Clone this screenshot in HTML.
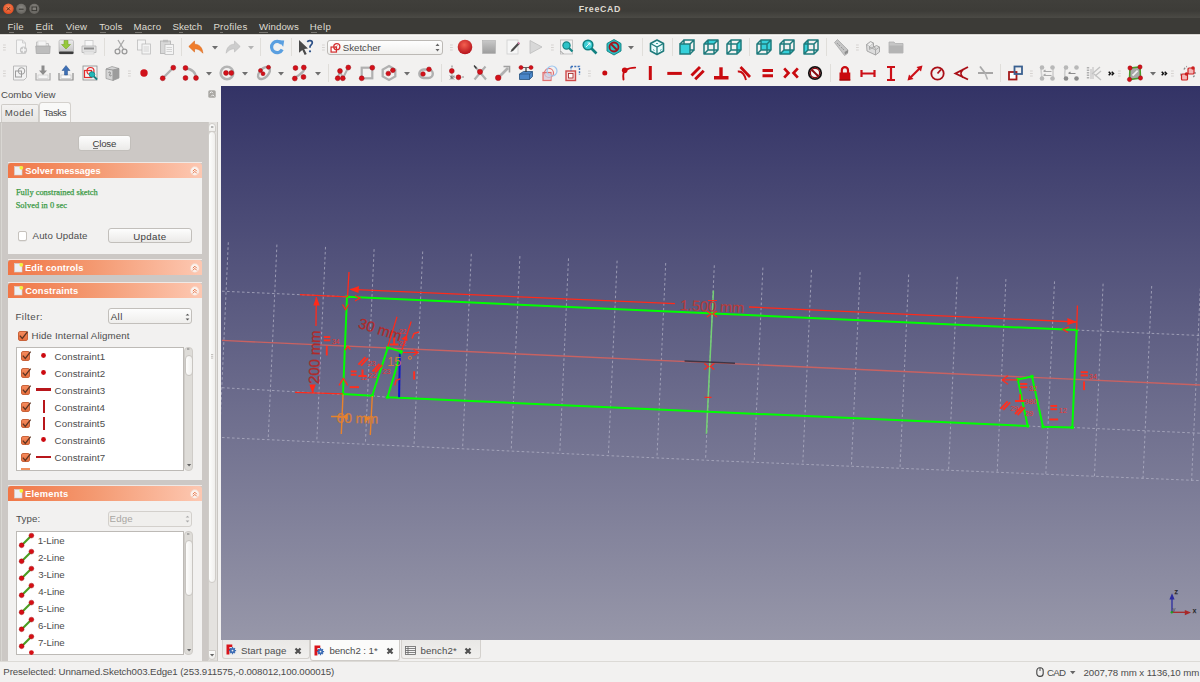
<!DOCTYPE html><html><head><meta charset="utf-8"><style>
html,body{margin:0;padding:0}
body{width:1200px;height:682px;overflow:hidden;position:relative;background:#f2f1f0;font-family:"Liberation Sans",sans-serif}
.t{position:absolute;white-space:pre;line-height:1}
svg{overflow:visible}
</style></head><body>
<div style="position:absolute;left:0px;top:0px;width:1200px;height:18px;background:linear-gradient(#403f3b,#3d3c38 60%,#4b4a45)"></div>
<div class="t" style="left:578.72px;top:5.35px;font-size:8.8px;color:#dfdbd2;font-weight:bold;font-family:'Liberation Sans', sans-serif;letter-spacing:0.664px;">FreeCAD</div>
<svg style="position:absolute;left:0px;top:0px;" width="50" height="18" viewBox="0 0 50 18">
<defs><radialGradient id="cl" cx="50%" cy="40%" r="60%"><stop offset="0" stop-color="#f88a5c"/><stop offset="1" stop-color="#e0461b"/></radialGradient>
<radialGradient id="gb" cx="50%" cy="40%" r="60%"><stop offset="0" stop-color="#8a8883"/><stop offset="1" stop-color="#64625d"/></radialGradient></defs>
<circle cx="8.4" cy="8.8" r="5.3" fill="url(#cl)"/>
<path d="M6.8 7.2l3.2 3.2M10 7.2l-3.2 3.2" stroke="#4a2a18" stroke-width="0.95"/>
<circle cx="21.2" cy="8.8" r="5.1" fill="url(#gb)"/>
<path d="M18.8 9.2h4.8" stroke="#3a3935" stroke-width="1.1"/>
<circle cx="34.3" cy="8.8" r="5.1" fill="url(#gb)"/>
<rect x="32" y="7" width="4.6" height="3.6" fill="none" stroke="#3a3935" stroke-width="1"/>
</svg>
<div style="position:absolute;left:0px;top:18px;width:1200px;height:16px;background:#3c3b37"></div>
<div class="t" style="left:7.45px;top:22.19px;font-size:9.7px;color:#dfdbd2;font-weight:normal;font-family:'Liberation Sans', sans-serif;letter-spacing:0.199px;">File</div>
<div class="t" style="left:35.45px;top:22.19px;font-size:9.7px;color:#dfdbd2;font-weight:normal;font-family:'Liberation Sans', sans-serif;letter-spacing:0.300px;">Edit</div>
<div class="t" style="left:65.71px;top:22.19px;font-size:9.7px;color:#dfdbd2;font-weight:normal;font-family:'Liberation Sans', sans-serif;letter-spacing:0.138px;">View</div>
<div class="t" style="left:99.29px;top:22.19px;font-size:9.7px;color:#dfdbd2;font-weight:normal;font-family:'Liberation Sans', sans-serif;letter-spacing:0.106px;">Tools</div>
<div class="t" style="left:133.45px;top:22.19px;font-size:9.7px;color:#dfdbd2;font-weight:normal;font-family:'Liberation Sans', sans-serif;letter-spacing:0.187px;">Macro</div>
<div class="t" style="left:172.56px;top:22.19px;font-size:9.7px;color:#dfdbd2;font-weight:normal;font-family:'Liberation Sans', sans-serif;letter-spacing:-0.019px;">Sketch</div>
<div class="t" style="left:213.45px;top:22.19px;font-size:9.7px;color:#dfdbd2;font-weight:normal;font-family:'Liberation Sans', sans-serif;letter-spacing:0.221px;">Profiles</div>
<div class="t" style="left:258.96px;top:22.19px;font-size:9.7px;color:#dfdbd2;font-weight:normal;font-family:'Liberation Sans', sans-serif;letter-spacing:0.089px;">Windows</div>
<div class="t" style="left:309.70px;top:22.19px;font-size:9.7px;color:#dfdbd2;font-weight:normal;font-family:'Liberation Sans', sans-serif;letter-spacing:0.413px;">Help</div>
<div style="position:absolute;left:8.5px;top:31.6px;width:5px;height:1.1px;background:#75736e"></div>
<div style="position:absolute;left:36.5px;top:31.6px;width:5px;height:1.1px;background:#75736e"></div>
<div style="position:absolute;left:66px;top:31.6px;width:6px;height:1.1px;background:#75736e"></div>
<div style="position:absolute;left:99.5px;top:31.6px;width:6px;height:1.1px;background:#75736e"></div>
<div style="position:absolute;left:134.5px;top:31.6px;width:7px;height:1.1px;background:#75736e"></div>
<div style="position:absolute;left:178.7px;top:31.6px;width:4.5px;height:1.1px;background:#75736e"></div>
<div style="position:absolute;left:220.3px;top:31.6px;width:3.2px;height:1.1px;background:#75736e"></div>
<div style="position:absolute;left:259px;top:31.6px;width:9px;height:1.1px;background:#75736e"></div>
<div style="position:absolute;left:310.5px;top:31.6px;width:6px;height:1.1px;background:#75736e"></div>
<div style="position:absolute;left:0px;top:34px;width:1200px;height:52px;background:#f2f1f0"></div>
<div style="position:absolute;left:0px;top:34px;width:1200px;height:1px;background:#d9d7d3"></div>
<div style="position:absolute;left:0px;top:35px;width:1200px;height:1px;background:#f8f7f6"></div>
<svg style="position:absolute;left:13px;top:39px" width="16" height="16" viewBox="0 0 16 16"><path d="M3.5 1h6l3 3v10.5h-9z" fill="#f6f6f6" stroke="#cfcfcf"/><path d="M9.5 1v3h3" fill="none" stroke="#cfcfcf"/><circle cx="10.5" cy="11" r="3.6" fill="#c6c6c6"/><path d="M10.5 8.6v4.8M8.1 11h4.8" stroke="#f6f6f6" stroke-width="1.4"/></svg><svg style="position:absolute;left:34.5px;top:39px" width="16" height="16" viewBox="0 0 16 16"><path d="M1.5 3h5l1 1.5h6v4h-12z" fill="#e6e6e6" stroke="#c4c4c4"/><rect x="3" y="2" width="8" height="7" fill="#f4f4f4" stroke="#d0d0d0" stroke-width="0.6"/><path d="M0.8 7h14.4l-0.5 7.5h-13.4z" fill="#bdbdbd" stroke="#a8a8a8" stroke-width="0.8"/></svg><svg style="position:absolute;left:57.5px;top:39px" width="16" height="16" viewBox="0 0 16 16"><defs><linearGradient id="sv" x1="0" y1="0" x2="0" y2="1"><stop offset="0" stop-color="#ececec"/><stop offset="1" stop-color="#bdbdbd"/></linearGradient></defs><rect x="1" y="1" width="14.5" height="14" rx="1.5" fill="url(#sv)" stroke="#a9a9a9" stroke-width="0.6"/><rect x="1" y="12.5" width="14.5" height="2.5" rx="1" fill="#3c3c3c"/><path d="M6 1.5h4v4h2.5l-4.5 4.5-4.5-4.5h2.5z" fill="#96c93c" stroke="#6e9c21" stroke-width="0.5"/></svg><svg style="position:absolute;left:81px;top:39px" width="16" height="16" viewBox="0 0 16 16"><rect x="4" y="1.5" width="8" height="6" fill="#f8f8f8" stroke="#c8c8c8" stroke-width="0.8"/><path d="M1 7h14v6.5h-14z" fill="#e2e2e2" stroke="#b4b4b4" stroke-width="0.8"/><rect x="3" y="8.5" width="10" height="2" fill="#8d8d8d"/><rect x="3" y="13" width="10" height="2" fill="#f0f0f0" stroke="#c8c8c8" stroke-width="0.6"/></svg><svg style="position:absolute;left:113px;top:39px" width="16" height="16" viewBox="0 0 16 16"><path d="M5 1l5.5 9M11 1l-5.5 9" stroke="#a9a9a9" stroke-width="1.3"/><circle cx="4.5" cy="12.5" r="2.4" fill="none" stroke="#9a9a9a" stroke-width="1.3"/><circle cx="11.5" cy="12.5" r="2.4" fill="none" stroke="#9a9a9a" stroke-width="1.3"/></svg><svg style="position:absolute;left:136px;top:39px" width="16" height="16" viewBox="0 0 16 16"><rect x="1.5" y="1" width="8" height="10" fill="#f4f4f4" stroke="#bdbdbd" stroke-width="0.8"/><rect x="6" y="5" width="8.5" height="10" fill="#f4f4f4" stroke="#bdbdbd" stroke-width="0.8"/><path d="M7.5 8h5.5M7.5 10h5.5M7.5 12h5.5" stroke="#c6c6c6" stroke-width="0.7"/></svg><svg style="position:absolute;left:159px;top:39px" width="16" height="16" viewBox="0 0 16 16"><rect x="1.5" y="2" width="10" height="12.5" fill="#d8d8d8" stroke="#b0b0b0" stroke-width="0.8"/><rect x="4" y="0.8" width="5" height="2.5" fill="#bdbdbd"/><rect x="6" y="5.5" width="8.5" height="10" fill="#f4f4f4" stroke="#bdbdbd" stroke-width="0.8"/><path d="M7.5 8.5h5.5M7.5 10.5h5.5M7.5 12.5h5.5" stroke="#c6c6c6" stroke-width="0.7"/></svg><svg style="position:absolute;left:188px;top:39px" width="16" height="16" viewBox="0 0 16 16"><path d="M6.5 2L0.8 7.5 6.5 13V9.8C10 9.8 12.3 11 14.8 14.2 14.5 8.8 11.5 5.2 6.5 5.2z" fill="#f07c2a" stroke="#d9661a" stroke-width="0.6" stroke-linejoin="round"/></svg><svg style="position:absolute;left:225px;top:39px" width="16" height="16" viewBox="0 0 16 16"><path d="M9.5 2l5.7 5.5-5.7 5.5V9.8C6 9.8 3.7 11 1.2 14.2 1.5 8.8 4.5 5.2 9.5 5.2z" fill="#cdcdcd" stroke="#b8b8b8" stroke-width="0.6" stroke-linejoin="round"/></svg><svg style="position:absolute;left:269px;top:39px" width="16" height="16" viewBox="0 0 16 16"><path d="M12.6 4.6A5.6 5.6 0 1 0 13.2 10.5" fill="none" stroke="#5a9fe0" stroke-width="3.2"/><path d="M9 1.2l6.2 0.3-1 6.3z" fill="#5a9fe0"/></svg><svg style="position:absolute;left:298px;top:39px" width="16" height="16" viewBox="0 0 16 16"><path d="M1 1l9 8.5-3.8 0.4 2.5 5-2 1-2.4-5-3.3 2.8z" fill="#4a4a4a"/><path d="M9.5 3.2c0.3-2 4.8-2.2 4.8 0.6 0 2-2.3 2-2.3 4v1" fill="none" stroke="#2b4f86" stroke-width="1.7"/><circle cx="12" cy="12.3" r="1.1" fill="#2b4f86"/></svg><svg style="position:absolute;left:457px;top:39px" width="16" height="16" viewBox="0 0 16 16"><defs><radialGradient id="rg" cx="45%" cy="35%" r="65%"><stop offset="0" stop-color="#f46050"/><stop offset="1" stop-color="#b5121b"/></radialGradient></defs><circle cx="8" cy="8" r="7.3" fill="url(#rg)"/></svg><svg style="position:absolute;left:480.5px;top:39px" width="16" height="16" viewBox="0 0 16 16"><defs><linearGradient id="stg" x1="0" y1="0" x2="0" y2="1"><stop offset="0" stop-color="#c8c8c8"/><stop offset="1" stop-color="#9c9c9c"/></linearGradient></defs><rect x="1.5" y="1.5" width="13" height="13" fill="url(#stg)" stroke="#b0b0b0" stroke-width="0.6"/></svg><svg style="position:absolute;left:504.5px;top:39px" width="16" height="16" viewBox="0 0 16 16"><rect x="2" y="1" width="11" height="14" fill="#f6f6f6" stroke="#cfcfcf" stroke-width="0.8"/><path d="M13.5 3l1.5 1.5-7 7.5-2.5 1 1-2.5z" fill="#4a4a4a"/><path d="M13.5 3l1.5 1.5-1 1-1.5-1.5z" fill="#e080b0"/></svg><svg style="position:absolute;left:527px;top:39px" width="16" height="16" viewBox="0 0 16 16"><path d="M3 1.5l12 6.5-12 6.5z" fill="#d8d8d8" stroke="#bdbdbd" stroke-width="0.8"/></svg><svg style="position:absolute;left:559px;top:39px" width="16" height="16" viewBox="0 0 16 16"><rect x="1.5" y="1" width="12" height="14" fill="#f2f2f2" stroke="#b8b8b8" stroke-width="0.8"/><path d="M1.5 12l3 3" stroke="#999"/><circle cx="7.5" cy="6.5" r="3.6" fill="#2cc3c8" stroke="#128585" stroke-width="1.2"/><path d="M10 9l3.5 3.5" stroke="#128585" stroke-width="2.2"/></svg><svg style="position:absolute;left:582px;top:39px" width="16" height="16" viewBox="0 0 16 16"><circle cx="6" cy="6" r="4.8" fill="#3ecfd6" stroke="#118080" stroke-width="1.6"/><path d="M9.5 9.5l5 5" stroke="#118080" stroke-width="2.6"/><path d="M4 8l4-4M5.5 4H8v2.5" fill="none" stroke="#fff" stroke-width="0.9"/></svg><svg style="position:absolute;left:605.5px;top:39px" width="16" height="16" viewBox="0 0 16 16"><path d="M8 0.5l7 4v7.5l-7 4-7-4v-7.5z" fill="#2bbfc5" stroke="#138080" stroke-width="0.9"/><circle cx="8" cy="8" r="4.5" fill="none" stroke="#a3141c" stroke-width="1.8"/><path d="M5 5l6 6" stroke="#a3141c" stroke-width="1.8"/></svg><svg style="position:absolute;left:648.5px;top:39px" width="16" height="16" viewBox="0 0 16 16"><path d="M8 1l6.5 3.5v7.5L8 15.5 1.5 12V4.5z" fill="#eafcfd" stroke="#1f7b7c" stroke-width="1.6" stroke-linejoin="round"/><path d="M1.5 4.5L8 8l6.5-3.5M8 8v7.5" fill="none" stroke="#1f7b7c" stroke-width="1.3"/><path d="M4 10.5l1.5 1M11 11.5l1.5-1M7 4.5h2" stroke="#178c8c" stroke-width="0.8"/></svg><svg style="position:absolute;left:679px;top:39px" width="16" height="16" viewBox="0 0 16 16"><path d="M5 1h10v10H5zM1 5l4-4M11 5l4-4M11 15l4-4" fill="none" stroke="#1f7b7c" stroke-width="1.5"/><path d="M1 5h10v10H1z" fill="#36d0da" stroke="#1f7b7c" stroke-width="1.5"/></svg><svg style="position:absolute;left:702.5px;top:39px" width="16" height="16" viewBox="0 0 16 16"><path d="M1 5l4-4h10l-4 4z" fill="#36d0da"/><path d="M1 5h10v10H1zM5 1h10v10H5zM1 5l4-4M11 5l4-4M11 15l4-4M1 15l4-4" fill="none" stroke="#1f7b7c" stroke-width="1.5" stroke-linejoin="round"/></svg><svg style="position:absolute;left:726px;top:39px" width="16" height="16" viewBox="0 0 16 16"><path d="M11 5l4-4v10l-4 4z" fill="#36d0da"/><path d="M1 5h10v10H1zM5 1h10v10H5zM1 5l4-4M11 5l4-4M11 15l4-4M1 15l4-4" fill="none" stroke="#1f7b7c" stroke-width="1.5" stroke-linejoin="round"/></svg><svg style="position:absolute;left:756px;top:39px" width="16" height="16" viewBox="0 0 16 16"><path d="M5 1h10v10H5z" fill="#36d0da"/><path d="M1 5h10v10H1zM5 1h10v10H5zM1 5l4-4M11 5l4-4M11 15l4-4M1 15l4-4" fill="none" stroke="#1f7b7c" stroke-width="1.5" stroke-linejoin="round"/></svg><svg style="position:absolute;left:779px;top:39px" width="16" height="16" viewBox="0 0 16 16"><path d="M1 15l4-4h10l-4 4z" fill="#36d0da"/><path d="M1 5h10v10H1zM5 1h10v10H5zM1 5l4-4M11 5l4-4M11 15l4-4M1 15l4-4" fill="none" stroke="#1f7b7c" stroke-width="1.5" stroke-linejoin="round"/></svg><svg style="position:absolute;left:802.5px;top:39px" width="16" height="16" viewBox="0 0 16 16"><path d="M1 5l4-4v10l-4 4z" fill="#36d0da"/><path d="M1 5h10v10H1zM5 1h10v10H5zM1 5l4-4M11 5l4-4M11 15l4-4M1 15l4-4" fill="none" stroke="#1f7b7c" stroke-width="1.5" stroke-linejoin="round"/></svg><svg style="position:absolute;left:832.5px;top:39px" width="16" height="16" viewBox="0 0 16 16"><path d="M1.5 3.5l3-3 10.5 10.5-0.5 3.5-3 2z" fill="#c4c4c4" stroke="#a0a0a0" stroke-width="0.7"/><path d="M11.5 13l3.5-2v2.5l-3 2z" fill="#8c8c8c"/><path d="M4 4l1.5 1.5M6 6l1 1M8 8l1.5 1.5M10 10l1 1" stroke="#888" stroke-width="0.7"/></svg><svg style="position:absolute;left:865px;top:39px" width="16" height="16" viewBox="0 0 16 16"><path d="M1.5 5.5L5.5 2.5l3 1.5v4l3-1.5 3 1.5v5l-4 3-8.5-4z" fill="#dcdcdc" stroke="#a0a0a0" stroke-width="0.9" stroke-linejoin="round"/><path d="M1.5 5.5l3 1.5v3.5M4.5 7l4-3M4.5 10.5l4-2.5 2.5 1.5M10.5 16v-5l4-3M11 11l-6.5-3" fill="none" stroke="#a0a0a0" stroke-width="0.8"/><path d="M2.5 6l3-2.5 2.2 1-3 2.5z" fill="#f0f0f0"/></svg><svg style="position:absolute;left:888px;top:39px" width="16" height="16" viewBox="0 0 16 16"><path d="M1 3h5l1.2 1.5H15V14H1z" fill="#c6c6c6" stroke="#b0b0b0" stroke-width="0.8"/><path d="M1 6.5h14V14H1z" fill="#b4b4b4"/></svg><svg style="position:absolute;left:12px;top:65px" width="16" height="16" viewBox="0 0 16 16"><path d="M1.5 1h13v11.5l-2.5 2.5H1.5z" fill="#f2f2f2" stroke="#b4b4b4" stroke-width="0.9"/><rect x="3.5" y="6" width="6" height="6" fill="none" stroke="#9c9c9c" stroke-width="1"/><circle cx="9.5" cy="6" r="3.3" fill="none" stroke="#9c9c9c" stroke-width="1"/></svg><svg style="position:absolute;left:34.5px;top:65px" width="16" height="16" viewBox="0 0 16 16"><path d="M1 8v7h14V8" fill="none" stroke="#a9a9a9" stroke-width="1.2"/><rect x="3" y="10" width="10" height="3.5" fill="#f4f4f4" stroke="#c8c8c8" stroke-width="0.6"/><path d="M6.5 0.5h3v5h2.5L8 10 4 5.5h2.5z" fill="#8c8c8c"/></svg><svg style="position:absolute;left:58px;top:65px" width="16" height="16" viewBox="0 0 16 16"><path d="M1 8v7h14V8" fill="none" stroke="#8c8c8c" stroke-width="1.2"/><rect x="3" y="10" width="10" height="3.5" fill="#fafafa" stroke="#bbb" stroke-width="0.6"/><path d="M6.5 10V5.5H4L8 0.5l4 5H9.5V10z" fill="#3d6fb5" stroke="#2a528a" stroke-width="0.5"/></svg><svg style="position:absolute;left:81.5px;top:65px" width="16" height="16" viewBox="0 0 16 16"><rect x="1" y="1" width="14" height="14" fill="#f4f4f4" stroke="#8a8a8a" stroke-width="0.8"/><rect x="2.5" y="5.5" width="7" height="7" fill="none" stroke="#e42a2a" stroke-width="1.2"/><circle cx="8.5" cy="6" r="3.5" fill="none" stroke="#e42a2a" stroke-width="1.2"/><circle cx="10" cy="9.5" r="2.8" fill="#22b8b8" stroke="#138080" stroke-width="0.8"/><path d="M12 11.5l3 3" stroke="#138080" stroke-width="1.8"/></svg><svg style="position:absolute;left:103.5px;top:65px" width="16" height="16" viewBox="0 0 16 16"><path d="M2 4l6-2.5L15 3.5v9.5l-6 2.5-7-2z" fill="#d4d4d4" stroke="#8a8a8a" stroke-width="0.6"/><path d="M9 5v10.5M2 4l7 1 6-1.5" fill="none" stroke="#888" stroke-width="0.8"/><path d="M9 5l6-1.5v9.5l-6 2.5z" fill="#9c9c9c"/><path d="M4.5 7.5c1.5-1 2.5 0 1.5 1.5s0 2.5 1.5 1.5" fill="none" stroke="#777" stroke-width="0.8"/></svg><svg style="position:absolute;left:139.5px;top:65px" width="16" height="16" viewBox="0 0 16 16"><circle cx="4" cy="8" r="3.7" fill="#d0111a"/></svg><svg style="position:absolute;left:159.5px;top:65px" width="16" height="16" viewBox="0 0 16 16"><path d="M3 13L13 3" stroke="#b0b0b0" stroke-width="2.4"/><circle cx="2.7" cy="13.3" r="2.46" fill="#d5101a" stroke="#9a0a10" stroke-width="0.5"/><circle cx="13.3" cy="2.7" r="2.46" fill="#d5101a" stroke="#9a0a10" stroke-width="0.5"/></svg><svg style="position:absolute;left:182.5px;top:65px" width="16" height="16" viewBox="0 0 16 16"><path d="M2.5 3.5C9 3.5 13 8 13 13" fill="none" stroke="#b0b0b0" stroke-width="2.4"/><circle cx="2.5" cy="3" r="2.46" fill="#d5101a" stroke="#9a0a10" stroke-width="0.5"/><circle cx="2.5" cy="13" r="2.46" fill="#d5101a" stroke="#9a0a10" stroke-width="0.5"/><circle cx="13" cy="13" r="2.46" fill="#d5101a" stroke="#9a0a10" stroke-width="0.5"/></svg><svg style="position:absolute;left:219px;top:65px" width="16" height="16" viewBox="0 0 16 16"><circle cx="8" cy="8" r="6.3" fill="none" stroke="#b4b4b4" stroke-width="2.6"/><circle cx="7" cy="8" r="2.46" fill="#d5101a" stroke="#9a0a10" stroke-width="0.5"/><circle cx="12.3" cy="8" r="2.46" fill="#d5101a" stroke="#9a0a10" stroke-width="0.5"/></svg><svg style="position:absolute;left:256px;top:65px" width="16" height="16" viewBox="0 0 16 16"><ellipse cx="8" cy="8" rx="7.3" ry="4.3" transform="rotate(-45 8 8)" fill="none" stroke="#b0b0b0" stroke-width="2.4"/><circle cx="4.5" cy="5.5" r="2.02" fill="#d5101a" stroke="#9a0a10" stroke-width="0.5"/><circle cx="7" cy="8.7" r="2.02" fill="#d5101a" stroke="#9a0a10" stroke-width="0.5"/><circle cx="12.5" cy="2.3" r="2.02" fill="#d5101a" stroke="#9a0a10" stroke-width="0.5"/></svg><svg style="position:absolute;left:291.5px;top:65px" width="16" height="16" viewBox="0 0 16 16"><path d="M2.5 13.5C6 9 10 11 13 3" fill="none" stroke="#b0b0b0" stroke-width="2.2"/><circle cx="3.5" cy="3" r="2.46" fill="#d5101a" stroke="#9a0a10" stroke-width="0.5"/><circle cx="11.8" cy="2.5" r="2.46" fill="#d5101a" stroke="#9a0a10" stroke-width="0.5"/><circle cx="2.8" cy="13.5" r="2.46" fill="#d5101a" stroke="#9a0a10" stroke-width="0.5"/><circle cx="11.5" cy="12" r="2.46" fill="#d5101a" stroke="#9a0a10" stroke-width="0.5"/></svg><svg style="position:absolute;left:334.5px;top:65px" width="16" height="16" viewBox="0 0 16 16"><path d="M2.7 13.3L5 6l2.8 7.3 5.5-10.8" fill="none" stroke="#b0b0b0" stroke-width="2"/><circle cx="2.7" cy="13.3" r="2.46" fill="#d5101a" stroke="#9a0a10" stroke-width="0.5"/><circle cx="5" cy="6" r="2.46" fill="#d5101a" stroke="#9a0a10" stroke-width="0.5"/><circle cx="7.8" cy="13.3" r="2.46" fill="#d5101a" stroke="#9a0a10" stroke-width="0.5"/><circle cx="13.3" cy="2.5" r="2.46" fill="#d5101a" stroke="#9a0a10" stroke-width="0.5"/></svg><svg style="position:absolute;left:358.5px;top:65px" width="16" height="16" viewBox="0 0 16 16"><rect x="2.7" y="2.7" width="10.6" height="10.6" fill="none" stroke="#b0b0b0" stroke-width="2.2"/><circle cx="2.7" cy="13.3" r="2.46" fill="#d5101a" stroke="#9a0a10" stroke-width="0.5"/><circle cx="13.3" cy="2.7" r="2.46" fill="#d5101a" stroke="#9a0a10" stroke-width="0.5"/></svg><svg style="position:absolute;left:381px;top:65px" width="16" height="16" viewBox="0 0 16 16"><path d="M8 1l6.3 3.6v6.8L8 15l-6.3-3.6V4.6z" fill="none" stroke="#b0b0b0" stroke-width="2.3"/><circle cx="7.3" cy="8.5" r="2.35" fill="#d5101a" stroke="#9a0a10" stroke-width="0.5"/><circle cx="11.8" cy="5.3" r="2.35" fill="#d5101a" stroke="#9a0a10" stroke-width="0.5"/></svg><svg style="position:absolute;left:418px;top:65px" width="16" height="16" viewBox="0 0 16 16"><rect x="1.3" y="4.5" width="13.5" height="8.5" rx="4.25" fill="none" stroke="#b0b0b0" stroke-width="2.4"/><circle cx="5" cy="9" r="2.35" fill="#d5101a" stroke="#9a0a10" stroke-width="0.5"/><circle cx="11" cy="4.3" r="2.35" fill="#d5101a" stroke="#9a0a10" stroke-width="0.5"/></svg><svg style="position:absolute;left:448.5px;top:65px" width="16" height="16" viewBox="0 0 16 16"><path d="M3 0.5V15M1 12h14.5" stroke="#8a8a8a" stroke-width="1.1" stroke-dasharray="2 1"/><path d="M1 14.5l4-4M1 10.5l4 4" stroke="#555" stroke-width="0.8"/><circle cx="2.8" cy="6" r="2.46" fill="#d5101a" stroke="#9a0a10" stroke-width="0.5"/><circle cx="9.5" cy="12.3" r="2.46" fill="#d5101a" stroke="#9a0a10" stroke-width="0.5"/></svg><svg style="position:absolute;left:471.5px;top:65px" width="16" height="16" viewBox="0 0 16 16"><path d="M3 1.5L14 14.5M13.5 1.5L2.5 14.5" stroke="#b0b0b0" stroke-width="2.2"/><path d="M2 0.5l2.5 3" stroke="#333" stroke-width="1.2"/><circle cx="8" cy="6.8" r="2.58" fill="#d5101a" stroke="#9a0a10" stroke-width="0.5"/></svg><svg style="position:absolute;left:495px;top:65px" width="16" height="16" viewBox="0 0 16 16"><path d="M3.5 12.5L13 3" stroke="#b0b0b0" stroke-width="2.6"/><path d="M8.5 1.5h6v6" fill="none" stroke="#a0a0a0" stroke-width="1.6"/><circle cx="3.2" cy="12.8" r="2.80" fill="#d5101a" stroke="#9a0a10" stroke-width="0.5"/></svg><svg style="position:absolute;left:518px;top:65px" width="16" height="16" viewBox="0 0 16 16"><path d="M1.5 9l4-2.5h9v5l-3 3H1.5z" fill="#4a86c8" stroke="#25527f" stroke-width="0.8"/><path d="M1.5 9h10v5.5M11.5 9l3-2.5" fill="none" stroke="#25527f" stroke-width="0.7"/><path d="M8 3v4" stroke="#333" stroke-width="1.2"/><path d="M3 2.5h10" stroke="#666" stroke-width="1"/><circle cx="3" cy="2.5" r="2.02" fill="#d5101a" stroke="#9a0a10" stroke-width="0.5"/><circle cx="13" cy="2.5" r="2.02" fill="#d5101a" stroke="#9a0a10" stroke-width="0.5"/></svg><svg style="position:absolute;left:541.5px;top:65px" width="16" height="16" viewBox="0 0 16 16"><rect x="1" y="7.5" width="8" height="8" fill="#f4c6c6" stroke="#e07070" stroke-width="1.2"/><circle cx="7" cy="8" r="4.5" fill="none" stroke="#e07070" stroke-width="1.2"/><circle cx="10" cy="6" r="5" fill="none" stroke="#9ec6ef" stroke-width="1.2"/><rect x="2" y="8.5" width="7" height="6" fill="#c9dcf2" opacity="0.6"/></svg><svg style="position:absolute;left:565px;top:65px" width="16" height="16" viewBox="0 0 16 16"><rect x="1" y="6" width="9.5" height="9.5" fill="#f4d6d6" stroke="#d04a4a" stroke-width="1.4"/><rect x="3.5" y="8.5" width="4.5" height="4.5" fill="#fff" stroke="#a02020" stroke-width="0.8"/><path d="M6 1.5h8.5v8.5" fill="none" stroke="#3a70b8" stroke-width="1.4" stroke-dasharray="2 1.3"/><path d="M6 1.5v4" stroke="#3a70b8" stroke-width="1.4" stroke-dasharray="2 1.3"/></svg><svg style="position:absolute;left:600.5px;top:65px" width="16" height="16" viewBox="0 0 16 16"><circle cx="3.8" cy="8.1" r="2.5" fill="#c90a0f"/></svg><svg style="position:absolute;left:620.5px;top:65px" width="16" height="16" viewBox="0 0 16 16"><path d="M2.5 14.5C1.8 10 2.5 6.5 4.5 5.2C7 3.5 10 2.6 14.2 2.6" fill="none" stroke="#c90a0f" stroke-width="1.9" stroke-linecap="round"/><circle cx="3.7" cy="5.2" r="2.8" fill="#c90a0f"/></svg><svg style="position:absolute;left:646.5px;top:65px" width="16" height="16" viewBox="0 0 16 16"><rect x="1.8" y="1" width="3" height="14" fill="#c90a0f"/></svg><svg style="position:absolute;left:666.5px;top:65px" width="16" height="16" viewBox="0 0 16 16"><rect x="0.3" y="6.9" width="14.5" height="3" fill="#c90a0f"/></svg><svg style="position:absolute;left:690px;top:65px" width="16" height="16" viewBox="0 0 16 16"><path d="M1.5 10.5l8.5-8.5M5.2 14.2l8.5-8.5" stroke="#c90a0f" stroke-width="2.9"/></svg><svg style="position:absolute;left:713px;top:65px" width="16" height="16" viewBox="0 0 16 16"><path d="M8 2.3v11" stroke="#c90a0f" stroke-width="3.4"/><rect x="1" y="11" width="14.5" height="3.5" fill="#c90a0f"/></svg><svg style="position:absolute;left:736.5px;top:65px" width="16" height="16" viewBox="0 0 16 16"><path d="M3.5 2L13 12" stroke="#c90a0f" stroke-width="2.8"/><path d="M0.8 6.5C4.5 6 7.5 9 9 15" fill="none" stroke="#c90a0f" stroke-width="1.9"/></svg><svg style="position:absolute;left:761.5px;top:65px" width="16" height="16" viewBox="0 0 16 16"><path d="M0.5 5.5h10.5M0.5 10.8h10.5" stroke="#c90a0f" stroke-width="2.9"/></svg><svg style="position:absolute;left:783px;top:65px" width="16" height="16" viewBox="0 0 16 16"><path d="M1.2 3.3L5.5 8 1.2 12.7M14.8 3.3L10.5 8l4.3 4.7" fill="none" stroke="#c90a0f" stroke-width="2.7"/></svg><svg style="position:absolute;left:806.5px;top:65px" width="16" height="16" viewBox="0 0 16 16"><circle cx="8" cy="8" r="6.2" fill="#f6f6f6" stroke="#111" stroke-width="1.8"/><circle cx="8" cy="8" r="4.7" fill="none" stroke="#8b0a10" stroke-width="1.4"/><path d="M4.7 4.7l6.6 6.6" stroke="#8b0a10" stroke-width="2"/></svg><svg style="position:absolute;left:838.5px;top:65px" width="16" height="16" viewBox="0 0 16 16"><path d="M2.8 8V5.2a3.1 3.1 0 0 1 6.2 0V8" fill="none" stroke="#c90a0f" stroke-width="2.2"/><rect x="0.5" y="7.5" width="10.8" height="8" fill="#c90a0f"/><rect x="0.5" y="14.3" width="10.8" height="1.2" fill="#9a0a0a"/></svg><svg style="position:absolute;left:860px;top:65px" width="16" height="16" viewBox="0 0 16 16"><path d="M1.5 5v7M14.5 5v7M1.5 8.5h13" stroke="#cc0f17" stroke-width="2.2"/></svg><svg style="position:absolute;left:885.5px;top:65px" width="16" height="16" viewBox="0 0 16 16"><path d="M1 2h8M1 15h8M5 2v13" stroke="#cc0f17" stroke-width="2.2"/></svg><svg style="position:absolute;left:906.5px;top:65px" width="16" height="16" viewBox="0 0 16 16"><path d="M4 12L12.5 3.5" stroke="#cc0f17" stroke-width="2.2"/><path d="M0.5 15.5l1.5-6 4.5 4.5z M15.5 0.5l-1.5 6-4.5-4.5z" fill="#cc0f17"/></svg><svg style="position:absolute;left:930px;top:65px" width="16" height="16" viewBox="0 0 16 16"><circle cx="7.5" cy="8.5" r="6.2" fill="none" stroke="#aa0f17" stroke-width="1.8"/><path d="M7.5 8.5l3.5-4" stroke="#aa0f17" stroke-width="1.8"/></svg><svg style="position:absolute;left:954px;top:65px" width="16" height="16" viewBox="0 0 16 16"><path d="M14 2L1.5 8.5l12.5 6M9 4.5c-3 3-3 5 0 8" fill="none" stroke="#aa0f17" stroke-width="1.9"/></svg><svg style="position:absolute;left:976.5px;top:65px" width="16" height="16" viewBox="0 0 16 16"><path d="M1 8h15" stroke="#7e7e7e" stroke-width="1.3"/><path d="M3 1.5l5 6.5" stroke="#a8a8a8" stroke-width="1.8"/><path d="M8 8l2.5 6.5" stroke="#b4b4b4" stroke-width="1.6"/></svg><svg style="position:absolute;left:1007.5px;top:65px" width="16" height="16" viewBox="0 0 16 16"><rect x="1" y="7" width="7.5" height="7.5" fill="#fff" stroke="#a31a1a" stroke-width="1.8"/><rect x="6.5" y="1.5" width="7.5" height="7.5" fill="none" stroke="#3a6090" stroke-width="1.8"/></svg><svg style="position:absolute;left:1039px;top:65px" width="16" height="16" viewBox="0 0 16 16"><path d="M2 3c0 5 1 8 1 11M14 3v11" stroke="#cfcfcf" stroke-width="1.6"/><path d="M4.5 6.5h8M4.5 10.5h8M4.5 6.5l2-1.5M4.5 10.5l2-1.5" stroke="#a8a8a8" stroke-width="1.2"/><circle cx="3" cy="2.5" r="2.3" fill="#b8b8b8"/><circle cx="13.5" cy="2.5" r="2.3" fill="#b8b8b8"/><circle cx="3" cy="13.5" r="2.3" fill="#b8b8b8"/><circle cx="13.5" cy="13.5" r="2.3" fill="#b8b8b8"/></svg><svg style="position:absolute;left:1062.5px;top:65px" width="16" height="16" viewBox="0 0 16 16"><path d="M2.5 3c-1 4-1 8 0 11" fill="none" stroke="#cfcfcf" stroke-width="1.6"/><path d="M5.5 8.5h7M5.5 8.5l2-1.5" stroke="#8c8c8c" stroke-width="1.2"/><circle cx="3" cy="2.5" r="2.3" fill="#b8b8b8"/><circle cx="13.5" cy="2.5" r="2.3" fill="#b8b8b8"/><circle cx="3" cy="13.5" r="2.3" fill="#8c8c8c"/><circle cx="13.5" cy="13.5" r="2.3" fill="#8c8c8c"/></svg><svg style="position:absolute;left:1086px;top:65px" width="16" height="16" viewBox="0 0 16 16"><path d="M2 2v12" stroke="#b0b0b0" stroke-width="2.4" stroke-dasharray="1.5 1"/><path d="M5 14V4M7 14V2" stroke="#c8c8c8" stroke-width="1.3"/><path d="M6 9l8-7M8 9l7 6M9 11l6-5" stroke="#c2c2c2" stroke-width="1.4"/></svg><svg style="position:absolute;left:1127px;top:65px" width="16" height="16" viewBox="0 0 16 16"><path d="M3 3l10-1 0.5 11-11 1.5z" fill="#a8a8a8" stroke="#4a9a2a" stroke-width="1.6"/><path d="M5.5 10.5l5-5" stroke="#eee" stroke-width="2.2"/><path d="M5 9.5l5-5" stroke="#8a8a8a" stroke-width="0.6"/><circle cx="3" cy="3" r="2.13" fill="#d5101a" stroke="#9a0a10" stroke-width="0.5"/><circle cx="13" cy="2" r="2.13" fill="#d5101a" stroke="#9a0a10" stroke-width="0.5"/><circle cx="13.5" cy="13" r="2.13" fill="#d5101a" stroke="#9a0a10" stroke-width="0.5"/><circle cx="2.5" cy="14.5" r="2.13" fill="#d5101a" stroke="#9a0a10" stroke-width="0.5"/></svg><svg style="position:absolute;left:1179.5px;top:65px" width="16" height="16" viewBox="0 0 16 16"><path d="M4 4.5a6 6 0 0 1 3-3M15 7a6 6 0 0 1-3 6M1 8.5a6 6 0 0 0 2 5" fill="none" stroke="#8a8a8a" stroke-width="1.4" stroke-dasharray="2 1.5"/><rect x="8" y="3" width="6" height="6" rx="1" fill="#f4b8b8" stroke="#cc2020" stroke-width="1.2"/><rect x="1.5" y="9" width="6" height="6" rx="1" fill="#f4b8b8" stroke="#cc2020" stroke-width="1.2"/><circle cx="13" cy="3" r="1.8" fill="#cc2020"/><circle cx="6.5" cy="9" r="1.8" fill="#cc2020"/></svg><svg style="position:absolute;left:2.7px;top:43.5px" width="4" height="7"><path d="M0 1h2.8M0 3.5h2.8M0 6h2.8" stroke="#cfcdc9" stroke-width="0.8"/></svg><svg style="position:absolute;left:322px;top:43.5px" width="4" height="7"><path d="M0 1h2.8M0 3.5h2.8M0 6h2.8" stroke="#cfcdc9" stroke-width="0.8"/></svg><svg style="position:absolute;left:450px;top:43.5px" width="4" height="7"><path d="M0 1h2.8M0 3.5h2.8M0 6h2.8" stroke="#cfcdc9" stroke-width="0.8"/></svg><svg style="position:absolute;left:550.7px;top:43.5px" width="4" height="7"><path d="M0 1h2.8M0 3.5h2.8M0 6h2.8" stroke="#cfcdc9" stroke-width="0.8"/></svg><svg style="position:absolute;left:855.7px;top:43.5px" width="4" height="7"><path d="M0 1h2.8M0 3.5h2.8M0 6h2.8" stroke="#cfcdc9" stroke-width="0.8"/></svg><svg style="position:absolute;left:2.7px;top:69.5px" width="4" height="7"><path d="M0 1h2.8M0 3.5h2.8M0 6h2.8" stroke="#cfcdc9" stroke-width="0.8"/></svg><svg style="position:absolute;left:127.69999999999999px;top:69.5px" width="4" height="7"><path d="M0 1h2.8M0 3.5h2.8M0 6h2.8" stroke="#cfcdc9" stroke-width="0.8"/></svg><svg style="position:absolute;left:588px;top:69.5px" width="4" height="7"><path d="M0 1h2.8M0 3.5h2.8M0 6h2.8" stroke="#cfcdc9" stroke-width="0.8"/></svg><svg style="position:absolute;left:1030px;top:69.5px" width="4" height="7"><path d="M0 1h2.8M0 3.5h2.8M0 6h2.8" stroke="#cfcdc9" stroke-width="0.8"/></svg><svg style="position:absolute;left:1118px;top:69.5px" width="4" height="7"><path d="M0 1h2.8M0 3.5h2.8M0 6h2.8" stroke="#cfcdc9" stroke-width="0.8"/></svg><svg style="position:absolute;left:1171px;top:69.5px" width="4" height="7"><path d="M0 1h2.8M0 3.5h2.8M0 6h2.8" stroke="#cfcdc9" stroke-width="0.8"/></svg><div style="position:absolute;left:103.8px;top:38px;width:1px;height:18px;background:#e0deda"></div><div style="position:absolute;left:180.5px;top:38px;width:1px;height:18px;background:#e0deda"></div><div style="position:absolute;left:260px;top:38px;width:1px;height:18px;background:#e0deda"></div><div style="position:absolute;left:291px;top:38px;width:1px;height:18px;background:#e0deda"></div><div style="position:absolute;left:641.7px;top:38px;width:1px;height:18px;background:#e0deda"></div><div style="position:absolute;left:671.7px;top:38px;width:1px;height:18px;background:#e0deda"></div><div style="position:absolute;left:749px;top:38px;width:1px;height:18px;background:#e0deda"></div><div style="position:absolute;left:826px;top:38px;width:1px;height:18px;background:#e0deda"></div><div style="position:absolute;left:327.5px;top:64px;width:1px;height:18px;background:#e0deda"></div><div style="position:absolute;left:440.7px;top:64px;width:1px;height:18px;background:#e0deda"></div><div style="position:absolute;left:830px;top:64px;width:1px;height:18px;background:#e0deda"></div><div style="position:absolute;left:999.7px;top:64px;width:1px;height:18px;background:#e0deda"></div><svg style="position:absolute;left:211.7px;top:45.5px" width="6" height="4"><path d="M0 0h6l-3 3.5z" fill="#6e6e6e"/></svg><svg style="position:absolute;left:248px;top:45.5px" width="6" height="4"><path d="M0 0h6l-3 3.5z" fill="#b4b4b4"/></svg><svg style="position:absolute;left:628px;top:45.5px" width="6" height="4"><path d="M0 0h6l-3 3.5z" fill="#6e6e6e"/></svg><svg style="position:absolute;left:205.7px;top:71.5px" width="6" height="4"><path d="M0 0h6l-3 3.5z" fill="#6e6e6e"/></svg><svg style="position:absolute;left:242px;top:71.5px" width="6" height="4"><path d="M0 0h6l-3 3.5z" fill="#6e6e6e"/></svg><svg style="position:absolute;left:278px;top:71.5px" width="6" height="4"><path d="M0 0h6l-3 3.5z" fill="#6e6e6e"/></svg><svg style="position:absolute;left:314.5px;top:71.5px" width="6" height="4"><path d="M0 0h6l-3 3.5z" fill="#6e6e6e"/></svg><svg style="position:absolute;left:404px;top:71.5px" width="6" height="4"><path d="M0 0h6l-3 3.5z" fill="#6e6e6e"/></svg><svg style="position:absolute;left:1150px;top:71.5px" width="6" height="4"><path d="M0 0h6l-3 3.5z" fill="#6e6e6e"/></svg><svg style="position:absolute;left:1108px;top:71px" width="7" height="5"><path d="M0.7 0.7l1.8 1.8-1.8 1.8M3.7 0.7l1.8 1.8-1.8 1.8" fill="none" stroke="#111" stroke-width="1.5"/></svg><svg style="position:absolute;left:1161px;top:71px" width="7" height="5"><path d="M0.7 0.7l1.8 1.8-1.8 1.8M3.7 0.7l1.8 1.8-1.8 1.8" fill="none" stroke="#111" stroke-width="1.5"/></svg><div style="position:absolute;left:327.3px;top:39.6px;width:116px;height:15.3px;box-sizing:border-box;border:1px solid #bcb9b5;border-radius:3px;background:linear-gradient(#fefefe,#f0efed)"></div><svg style="position:absolute;left:330px;top:41.5px" width="11.5" height="11.5" viewBox="0 0 16 16"><rect x="1.5" y="7" width="7.5" height="7" fill="#fff" stroke="#d43030" stroke-width="1.7"/><circle cx="9.5" cy="6.5" r="4.3" fill="none" stroke="#d43030" stroke-width="1.7"/><path d="M5.5 9.5l5-5" stroke="#d43030" stroke-width="0.9"/></svg><svg style="position:absolute;left:435px;top:43px" width="5" height="9"><path d="M0.5 3l2-2.4 2 2.4z M0.5 6l2 2.4 2-2.4z" fill="#666"/></svg>
<div class="t" style="left:342.86px;top:42.99px;font-size:9.7px;color:#4c4c4c;font-weight:normal;font-family:'Liberation Sans', sans-serif;letter-spacing:-0.041px;">Sketcher</div>
<div class="t" style="left:1.02px;top:90.19px;font-size:9.7px;color:#4c4c4c;font-weight:normal;font-family:'Liberation Sans', sans-serif;letter-spacing:-0.018px;">Combo View</div>
<svg style="position:absolute;left:208px;top:90.3px;" width="8" height="8" viewBox="0 0 8 8"><rect x="0.3" y="0.3" width="7.4" height="7.4" rx="1.5" fill="#a9a7a3"/><path d="M1.8 3.2l1.6-1.5 1.5 1.5M3.2 6.3l1.5-1.5 1.5 1.5" fill="none" stroke="#f4f4f4" stroke-width="1"/></svg>
<div style="position:absolute;left:0.5px;top:103.5px;width:38px;height:18px;background:linear-gradient(#f3f2f1,#e6e4e1);border:1px solid #cfccc8;border-bottom:none;border-radius:2px 2px 0 0;box-sizing:border-box"></div>
<div style="position:absolute;left:38.5px;top:101.7px;width:32.5px;height:20.3px;background:#f9f9f8;border:1px solid #d4d1cd;border-bottom:none;border-radius:3px 3px 0 0;box-sizing:border-box"></div>
<div class="t" style="left:4.80px;top:107.79px;font-size:9.7px;color:#4c4c4c;font-weight:normal;font-family:'Liberation Sans', sans-serif;letter-spacing:0.481px;">Model</div>
<div class="t" style="left:43.49px;top:107.79px;font-size:9.7px;color:#4c4c4c;font-weight:normal;font-family:'Liberation Sans', sans-serif;letter-spacing:-0.408px;">Tasks</div>
<div style="position:absolute;left:0px;top:121.5px;width:218px;height:540px;background:#d9d7d3;border:1px solid #c9c6c2;box-sizing:border-box"></div>
<div style="position:absolute;left:2px;top:122.5px;width:206px;height:538px;background:#ccc8c5"></div>
<div style="position:absolute;left:208px;top:122px;width:9px;height:538px;background:#e4e2df;border-left:1px solid #cfccc8;box-sizing:border-box"></div>
<div style="position:absolute;left:208.3px;top:131px;width:7.8px;height:452px;background:linear-gradient(90deg,#fdfdfc,#f0efed);border:1px solid #cfccc8;border-radius:4px;box-sizing:border-box"></div>
<div style="position:absolute;left:77.8px;top:135px;width:53.5px;height:15.5px;background:linear-gradient(#fdfdfd,#ebeae8);border:1px solid #c2bfbb;border-radius:3px;box-sizing:border-box"></div>
<div class="t" style="left:92.42px;top:138.69px;font-size:9.7px;color:#3c3c3c;font-weight:normal;font-family:'Liberation Sans', sans-serif;letter-spacing:-0.198px;">Close</div>
<div style="position:absolute;left:93px;top:148px;width:5px;height:1px;background:#777"></div>
<div style="position:absolute;left:7.7px;top:162px;width:194px;height:1px;background:#efe9e6"></div>
<div style="position:absolute;left:7.7px;top:163px;width:194px;height:15px;background:linear-gradient(90deg,#f07646,#f49a72 45%,#fdc8b2);border-radius:3px 3px 0 0"></div>
<svg style="position:absolute;left:13.5px;top:166px;" width="9" height="9.5" viewBox="0 0 9 9.5"><rect x="0.5" y="0.5" width="7.5" height="8.5" fill="#eef0f3" stroke="#d2d4d8" stroke-width="0.6"/><circle cx="7.3" cy="1.8" r="1.9" fill="#f4f13a"/></svg>
<div class="t" style="left:25.34px;top:166.63px;font-size:9.3px;color:#ffffff;font-weight:bold;font-family:'Liberation Sans', sans-serif;letter-spacing:-0.048px;">Solver messages</div>
<svg style="position:absolute;left:190px;top:165.5px;" width="10" height="10" viewBox="0 0 10 10"><circle cx="4.8" cy="5" r="4.4" fill="#fbf1ec" stroke="#f3d2c2" stroke-width="0.6"/><path d="M2.8 5.2l2-2 2 2M2.8 7.4l2-2 2 2" fill="none" stroke="#e8764b" stroke-width="1"/></svg>
<div style="position:absolute;left:7.7px;top:178px;width:194px;height:76px;background:#f2f1f0"></div>
<div class="t" style="left:15.96px;top:188.89px;font-size:8.4px;color:#3a9a45;font-weight:normal;font-family:'Liberation Serif', serif;letter-spacing:-0.003px;-webkit-text-stroke:0.25px #3a9a45;">Fully constrained sketch</div>
<div class="t" style="left:15.65px;top:202.39px;font-size:8.4px;color:#3a9a45;font-weight:normal;font-family:'Liberation Serif', serif;letter-spacing:0.036px;-webkit-text-stroke:0.25px #3a9a45;">Solved in 0 sec</div>
<div style="position:absolute;left:17.6px;top:231px;width:9.8px;height:9.8px;background:#fff;border:1px solid #c6c2bd;border-radius:2px;box-sizing:border-box;box-shadow:0 0.5px 0.5px rgba(0,0,0,0.1)"></div>
<div class="t" style="left:32.58px;top:231.29px;font-size:9.7px;color:#4c4c4c;font-weight:normal;font-family:'Liberation Sans', sans-serif;letter-spacing:0.092px;">Auto Update</div>
<div style="position:absolute;left:107.6px;top:228.2px;width:84.4px;height:15.3px;background:linear-gradient(#fdfdfd,#ebeae8);border:1px solid #c2bfbb;border-radius:3px;box-sizing:border-box"></div>
<div class="t" style="left:133.25px;top:232.29px;font-size:9.7px;color:#3c3c3c;font-weight:normal;font-family:'Liberation Sans', sans-serif;letter-spacing:0.320px;">Update</div>
<div style="position:absolute;left:7.7px;top:259.3px;width:194px;height:1px;background:#efe9e6"></div>
<div style="position:absolute;left:7.7px;top:260.3px;width:194px;height:15px;background:linear-gradient(90deg,#f07646,#f49a72 45%,#fdc8b2);border-radius:3px 3px 0 0"></div>
<svg style="position:absolute;left:13.5px;top:263.3px;" width="9" height="9.5" viewBox="0 0 9 9.5"><rect x="0.5" y="0.5" width="7.5" height="8.5" fill="#eef0f3" stroke="#d2d4d8" stroke-width="0.6"/><circle cx="7.3" cy="1.8" r="1.9" fill="#f4f13a"/></svg>
<div class="t" style="left:24.99px;top:263.93px;font-size:9.3px;color:#ffffff;font-weight:bold;font-family:'Liberation Sans', sans-serif;letter-spacing:0.138px;">Edit controls</div>
<svg style="position:absolute;left:190px;top:262.8px;" width="10" height="10" viewBox="0 0 10 10"><circle cx="4.8" cy="5" r="4.4" fill="#fbf1ec" stroke="#f3d2c2" stroke-width="0.6"/><path d="M2.8 5.2l2-2 2 2M2.8 7.4l2-2 2 2" fill="none" stroke="#e8764b" stroke-width="1"/></svg>
<div style="position:absolute;left:7.7px;top:282.3px;width:194px;height:1px;background:#efe9e6"></div>
<div style="position:absolute;left:7.7px;top:283.3px;width:194px;height:15px;background:linear-gradient(90deg,#f07646,#f49a72 45%,#fdc8b2);border-radius:3px 3px 0 0"></div>
<svg style="position:absolute;left:13.5px;top:286.3px;" width="9" height="9.5" viewBox="0 0 9 9.5"><rect x="0.5" y="0.5" width="7.5" height="8.5" fill="#eef0f3" stroke="#d2d4d8" stroke-width="0.6"/><circle cx="7.3" cy="1.8" r="1.9" fill="#f4f13a"/></svg>
<div class="t" style="left:25.22px;top:286.93px;font-size:9.3px;color:#ffffff;font-weight:bold;font-family:'Liberation Sans', sans-serif;letter-spacing:0.128px;">Constraints</div>
<svg style="position:absolute;left:190px;top:285.8px;" width="10" height="10" viewBox="0 0 10 10"><circle cx="4.8" cy="5" r="4.4" fill="#fbf1ec" stroke="#f3d2c2" stroke-width="0.6"/><path d="M2.8 5.2l2-2 2 2M2.8 7.4l2-2 2 2" fill="none" stroke="#e8764b" stroke-width="1"/></svg>
<div style="position:absolute;left:7.7px;top:298.3px;width:194px;height:181.3px;background:#f2f1f0"></div>
<div class="t" style="left:15.40px;top:311.89px;font-size:9.7px;color:#4c4c4c;font-weight:normal;font-family:'Liberation Sans', sans-serif;letter-spacing:0.488px;">Filter:</div>
<div style="position:absolute;left:107.6px;top:307.9px;width:84.4px;height:16.1px;background:linear-gradient(#fdfdfd,#efeeec);border:1px solid #c2bfbb;border-radius:3px;box-sizing:border-box"></div>
<div class="t" style="left:110.78px;top:311.89px;font-size:9.7px;color:#3c3c3c;font-weight:normal;font-family:'Liberation Sans', sans-serif;letter-spacing:0.391px;">All</div>
<svg style="position:absolute;left:184.5px;top:313px;" width="5" height="8" viewBox="0 0 5 8"><path d="M0.6 2.6l1.9-1.9 1.9 1.9z M0.6 5.6l1.9 1.9 1.9-1.9z" fill="#555"/></svg>
<div style="position:absolute;left:18.2px;top:331px;width:9.6px;height:9.6px;background:linear-gradient(#f58a5c,#e8703f);border:1px solid #c9633a;border-radius:2px;box-sizing:border-box"></div>
<svg style="position:absolute;left:18.2px;top:331px;" width="10" height="10" viewBox="0 0 10 10"><path d="M1.8 4.6l2.5 2.9 5.3-6.9" fill="none" stroke="#5e3523" stroke-width="1.3"/></svg>
<div class="t" style="left:31.50px;top:330.89px;font-size:9.7px;color:#4c4c4c;font-weight:normal;font-family:'Liberation Sans', sans-serif;letter-spacing:0.156px;">Hide Internal Aligment</div>
<div style="position:absolute;left:16.4px;top:346.5px;width:168px;height:124px;background:#fff;border:1px solid #bdbab6;box-sizing:border-box"></div>
<div style="position:absolute;left:184.3px;top:346.5px;width:8.5px;height:124px;background:#dedcd8;border:1px solid #cfccc8;border-radius:4px;box-sizing:border-box"></div>
<div style="position:absolute;left:184.6px;top:355.3px;width:8px;height:20.7px;background:linear-gradient(90deg,#fdfdfc,#f0efed);border:1px solid #c8c5c1;border-radius:4px;box-sizing:border-box"></div>
<div style="position:absolute;left:20.8px;top:351.4px;width:9.6px;height:9.6px;background:linear-gradient(#f58a5c,#e8703f);border:1px solid #c9633a;border-radius:2px;box-sizing:border-box"></div>
<svg style="position:absolute;left:20.8px;top:351.4px;" width="10" height="10" viewBox="0 0 10 10"><path d="M1.8 4.6l2.5 2.9 5.3-6.9" fill="none" stroke="#5e3523" stroke-width="1.3"/></svg>
<svg style="position:absolute;left:40px;top:351.9px;" width="7" height="7" viewBox="0 0 7 7"><circle cx="3.5" cy="3.5" r="2.4" fill="#cc0a10"/></svg>
<div class="t" style="left:54.62px;top:352.09px;font-size:9.7px;color:#4c4c4c;font-weight:normal;font-family:'Liberation Sans', sans-serif;letter-spacing:0.094px;">Constraint1</div>
<div style="position:absolute;left:20.8px;top:368.25px;width:9.6px;height:9.6px;background:linear-gradient(#f58a5c,#e8703f);border:1px solid #c9633a;border-radius:2px;box-sizing:border-box"></div>
<svg style="position:absolute;left:20.8px;top:368.25px;" width="10" height="10" viewBox="0 0 10 10"><path d="M1.8 4.6l2.5 2.9 5.3-6.9" fill="none" stroke="#5e3523" stroke-width="1.3"/></svg>
<svg style="position:absolute;left:40px;top:368.75px;" width="7" height="7" viewBox="0 0 7 7"><circle cx="3.5" cy="3.5" r="2.4" fill="#cc0a10"/></svg>
<div class="t" style="left:54.62px;top:368.94px;font-size:9.7px;color:#4c4c4c;font-weight:normal;font-family:'Liberation Sans', sans-serif;letter-spacing:0.096px;">Constraint2</div>
<div style="position:absolute;left:20.8px;top:385.09999999999997px;width:9.6px;height:9.6px;background:linear-gradient(#f58a5c,#e8703f);border:1px solid #c9633a;border-radius:2px;box-sizing:border-box"></div>
<svg style="position:absolute;left:20.8px;top:385.09999999999997px;" width="10" height="10" viewBox="0 0 10 10"><path d="M1.8 4.6l2.5 2.9 5.3-6.9" fill="none" stroke="#5e3523" stroke-width="1.3"/></svg>
<div style="position:absolute;left:36px;top:388.4px;width:15px;height:2.2px;background:#b8161b"></div>
<div class="t" style="left:54.62px;top:385.79px;font-size:9.7px;color:#4c4c4c;font-weight:normal;font-family:'Liberation Sans', sans-serif;letter-spacing:0.090px;">Constraint3</div>
<div style="position:absolute;left:20.8px;top:401.95px;width:9.6px;height:9.6px;background:linear-gradient(#f58a5c,#e8703f);border:1px solid #c9633a;border-radius:2px;box-sizing:border-box"></div>
<svg style="position:absolute;left:20.8px;top:401.95px;" width="10" height="10" viewBox="0 0 10 10"><path d="M1.8 4.6l2.5 2.9 5.3-6.9" fill="none" stroke="#5e3523" stroke-width="1.3"/></svg>
<div style="position:absolute;left:42.5px;top:399.75px;width:2.2px;height:13px;background:#b8161b"></div>
<div class="t" style="left:54.62px;top:402.64px;font-size:9.7px;color:#4c4c4c;font-weight:normal;font-family:'Liberation Sans', sans-serif;letter-spacing:0.076px;">Constraint4</div>
<div style="position:absolute;left:20.8px;top:418.8px;width:9.6px;height:9.6px;background:linear-gradient(#f58a5c,#e8703f);border:1px solid #c9633a;border-radius:2px;box-sizing:border-box"></div>
<svg style="position:absolute;left:20.8px;top:418.8px;" width="10" height="10" viewBox="0 0 10 10"><path d="M1.8 4.6l2.5 2.9 5.3-6.9" fill="none" stroke="#5e3523" stroke-width="1.3"/></svg>
<div style="position:absolute;left:42.5px;top:416.6px;width:2.2px;height:13px;background:#b8161b"></div>
<div class="t" style="left:54.62px;top:419.49px;font-size:9.7px;color:#4c4c4c;font-weight:normal;font-family:'Liberation Sans', sans-serif;letter-spacing:0.088px;">Constraint5</div>
<div style="position:absolute;left:20.8px;top:435.65px;width:9.6px;height:9.6px;background:linear-gradient(#f58a5c,#e8703f);border:1px solid #c9633a;border-radius:2px;box-sizing:border-box"></div>
<svg style="position:absolute;left:20.8px;top:435.65px;" width="10" height="10" viewBox="0 0 10 10"><path d="M1.8 4.6l2.5 2.9 5.3-6.9" fill="none" stroke="#5e3523" stroke-width="1.3"/></svg>
<svg style="position:absolute;left:40px;top:436.15px;" width="7" height="7" viewBox="0 0 7 7"><circle cx="3.5" cy="3.5" r="2.4" fill="#cc0a10"/></svg>
<div class="t" style="left:54.62px;top:436.34px;font-size:9.7px;color:#4c4c4c;font-weight:normal;font-family:'Liberation Sans', sans-serif;letter-spacing:0.090px;">Constraint6</div>
<div style="position:absolute;left:20.8px;top:452.5px;width:9.6px;height:9.6px;background:linear-gradient(#f58a5c,#e8703f);border:1px solid #c9633a;border-radius:2px;box-sizing:border-box"></div>
<svg style="position:absolute;left:20.8px;top:452.5px;" width="10" height="10" viewBox="0 0 10 10"><path d="M1.8 4.6l2.5 2.9 5.3-6.9" fill="none" stroke="#5e3523" stroke-width="1.3"/></svg>
<div style="position:absolute;left:36px;top:455.8px;width:15px;height:2.2px;background:#b8161b"></div>
<div class="t" style="left:54.62px;top:453.19px;font-size:9.7px;color:#4c4c4c;font-weight:normal;font-family:'Liberation Sans', sans-serif;letter-spacing:0.096px;">Constraint7</div>
<div style="position:absolute;left:20.8px;top:468px;width:9.6px;height:2px;background:#f0905f"></div>
<div style="position:absolute;left:7.7px;top:479.6px;width:194px;height:0px;"></div>
<div style="position:absolute;left:7.7px;top:485px;width:194px;height:1px;background:#efe9e6"></div>
<div style="position:absolute;left:7.7px;top:486px;width:194px;height:15px;background:linear-gradient(90deg,#f07646,#f49a72 45%,#fdc8b2);border-radius:3px 3px 0 0"></div>
<svg style="position:absolute;left:13.5px;top:489px;" width="9" height="9.5" viewBox="0 0 9 9.5"><rect x="0.5" y="0.5" width="7.5" height="8.5" fill="#eef0f3" stroke="#d2d4d8" stroke-width="0.6"/><circle cx="7.3" cy="1.8" r="1.9" fill="#f4f13a"/></svg>
<div class="t" style="left:24.99px;top:489.63px;font-size:9.3px;color:#ffffff;font-weight:bold;font-family:'Liberation Sans', sans-serif;letter-spacing:0.277px;">Elements</div>
<svg style="position:absolute;left:190px;top:488.5px;" width="10" height="10" viewBox="0 0 10 10"><circle cx="4.8" cy="5" r="4.4" fill="#fbf1ec" stroke="#f3d2c2" stroke-width="0.6"/><path d="M2.8 5.2l2-2 2 2M2.8 7.4l2-2 2 2" fill="none" stroke="#e8764b" stroke-width="1"/></svg>
<div style="position:absolute;left:7.7px;top:501px;width:194px;height:160px;background:#f2f1f0"></div>
<div class="t" style="left:16.09px;top:514.29px;font-size:9.7px;color:#4c4c4c;font-weight:normal;font-family:'Liberation Sans', sans-serif;letter-spacing:0.117px;">Type:</div>
<div style="position:absolute;left:107.5px;top:510.5px;width:84.3px;height:16px;background:#f0efed;border:1px solid #d3d0cc;border-radius:3px;box-sizing:border-box"></div>
<div class="t" style="left:109.60px;top:514.29px;font-size:9.7px;color:#a8a6a2;font-weight:normal;font-family:'Liberation Sans', sans-serif;letter-spacing:0.158px;">Edge</div>
<svg style="position:absolute;left:184.5px;top:515px;" width="5" height="8" viewBox="0 0 5 8"><path d="M0.6 2.6l1.9-1.9 1.9 1.9z M0.6 5.6l1.9 1.9 1.9-1.9z" fill="#aaa"/></svg>
<div style="position:absolute;left:16.4px;top:531.2px;width:168px;height:123.5px;background:#fff;border:1px solid #bdbab6;box-sizing:border-box"></div>
<div style="position:absolute;left:184.3px;top:531.2px;width:8.5px;height:123.5px;background:#dedcd8;border:1px solid #cfccc8;border-radius:4px;box-sizing:border-box"></div>
<div style="position:absolute;left:184.6px;top:539.5px;width:8px;height:56.5px;background:linear-gradient(90deg,#fdfdfc,#f0efed);border:1px solid #c8c5c1;border-radius:4px;box-sizing:border-box"></div>
<svg style="position:absolute;left:19px;top:532.5px;" width="15" height="15" viewBox="0 0 15 15"><path d="M2.5 12.5L12.5 2.5" stroke="#4a9e22" stroke-width="2.1"/><circle cx="2.6" cy="12.3" r="2.45" fill="#d50f15" stroke="#a00a0f" stroke-width="0.4"/><circle cx="12.4" cy="2.6" r="2.45" fill="#d50f15" stroke="#a00a0f" stroke-width="0.4"/></svg>
<div class="t" style="left:37.76px;top:536.49px;font-size:9.7px;color:#4c4c4c;font-weight:normal;font-family:'Liberation Sans', sans-serif;letter-spacing:-0.020px;">1-Line</div>
<svg style="position:absolute;left:19px;top:549.35px;" width="15" height="15" viewBox="0 0 15 15"><path d="M2.5 12.5L12.5 2.5" stroke="#4a9e22" stroke-width="2.1"/><circle cx="2.6" cy="12.3" r="2.45" fill="#d50f15" stroke="#a00a0f" stroke-width="0.4"/><circle cx="12.4" cy="2.6" r="2.45" fill="#d50f15" stroke="#a00a0f" stroke-width="0.4"/></svg>
<div class="t" style="left:38.02px;top:553.34px;font-size:9.7px;color:#4c4c4c;font-weight:normal;font-family:'Liberation Sans', sans-serif;letter-spacing:-0.071px;">2-Line</div>
<svg style="position:absolute;left:19px;top:566.2px;" width="15" height="15" viewBox="0 0 15 15"><path d="M2.5 12.5L12.5 2.5" stroke="#4a9e22" stroke-width="2.1"/><circle cx="2.6" cy="12.3" r="2.45" fill="#d50f15" stroke="#a00a0f" stroke-width="0.4"/><circle cx="12.4" cy="2.6" r="2.45" fill="#d50f15" stroke="#a00a0f" stroke-width="0.4"/></svg>
<div class="t" style="left:38.13px;top:570.19px;font-size:9.7px;color:#4c4c4c;font-weight:normal;font-family:'Liberation Sans', sans-serif;letter-spacing:-0.094px;">3-Line</div>
<svg style="position:absolute;left:19px;top:583.05px;" width="15" height="15" viewBox="0 0 15 15"><path d="M2.5 12.5L12.5 2.5" stroke="#4a9e22" stroke-width="2.1"/><circle cx="2.6" cy="12.3" r="2.45" fill="#d50f15" stroke="#a00a0f" stroke-width="0.4"/><circle cx="12.4" cy="2.6" r="2.45" fill="#d50f15" stroke="#a00a0f" stroke-width="0.4"/></svg>
<div class="t" style="left:38.29px;top:587.04px;font-size:9.7px;color:#4c4c4c;font-weight:normal;font-family:'Liberation Sans', sans-serif;letter-spacing:-0.125px;">4-Line</div>
<svg style="position:absolute;left:19px;top:599.9px;" width="15" height="15" viewBox="0 0 15 15"><path d="M2.5 12.5L12.5 2.5" stroke="#4a9e22" stroke-width="2.1"/><circle cx="2.6" cy="12.3" r="2.45" fill="#d50f15" stroke="#a00a0f" stroke-width="0.4"/><circle cx="12.4" cy="2.6" r="2.45" fill="#d50f15" stroke="#a00a0f" stroke-width="0.4"/></svg>
<div class="t" style="left:38.11px;top:603.89px;font-size:9.7px;color:#4c4c4c;font-weight:normal;font-family:'Liberation Sans', sans-serif;letter-spacing:-0.090px;">5-Line</div>
<svg style="position:absolute;left:19px;top:616.75px;" width="15" height="15" viewBox="0 0 15 15"><path d="M2.5 12.5L12.5 2.5" stroke="#4a9e22" stroke-width="2.1"/><circle cx="2.6" cy="12.3" r="2.45" fill="#d50f15" stroke="#a00a0f" stroke-width="0.4"/><circle cx="12.4" cy="2.6" r="2.45" fill="#d50f15" stroke="#a00a0f" stroke-width="0.4"/></svg>
<div class="t" style="left:38.02px;top:620.74px;font-size:9.7px;color:#4c4c4c;font-weight:normal;font-family:'Liberation Sans', sans-serif;letter-spacing:-0.071px;">6-Line</div>
<svg style="position:absolute;left:19px;top:633.6px;" width="15" height="15" viewBox="0 0 15 15"><path d="M2.5 12.5L12.5 2.5" stroke="#4a9e22" stroke-width="2.1"/><circle cx="2.6" cy="12.3" r="2.45" fill="#d50f15" stroke="#a00a0f" stroke-width="0.4"/><circle cx="12.4" cy="2.6" r="2.45" fill="#d50f15" stroke="#a00a0f" stroke-width="0.4"/></svg>
<div class="t" style="left:38.01px;top:637.59px;font-size:9.7px;color:#4c4c4c;font-weight:normal;font-family:'Liberation Sans', sans-serif;letter-spacing:-0.069px;">7-Line</div>
<div style="position:absolute;left:221px;top:86px;width:979px;height:554px;background:linear-gradient(#333366,#9797a9)"></div>
<svg style="position:absolute;left:0;top:0" width="1200" height="682" viewBox="0 0 1200 682"><defs><clipPath id="vc"><rect x="221" y="86" width="979" height="554"/></clipPath></defs><g clip-path="url(#vc)"><path d="M228.3 242.3L219.6 436.8M276.9 244.6L268.2 439.0M325.5 246.9L316.8 441.2M374.1 249.2L365.4 443.4M422.7 251.5L414.0 445.6M471.3 253.8L462.6 447.8M519.9 256.1L511.2 450.0M568.5 258.4L559.8 452.2M617.1 260.7L608.4 454.4M665.7 263.0L657.0 456.6M714.3 265.3L705.6 458.8M762.9 267.6L754.2 461.0M811.5 269.9L802.8 463.2M860.1 272.2L851.4 465.4M908.7 274.5L900.0 467.6M957.3 276.8L948.6 469.8M1005.9 279.1L997.2 472.0M1054.5 281.4L1045.8 474.2M1103.1 283.7L1094.4 476.4M1151.7 286.0L1143.0 478.6M1200.3 288.3L1191.6 480.8" stroke="#b4b4c8" stroke-opacity="0.72" stroke-width="1" stroke-dasharray="2.6 2.4" fill="none"/><path d="M222 291.2L347.5 296.8M1076.7 330.1L1200 335.5 M222 387.7L343 394.4M1072.3 427.5L1200 433.2 M372.2 395.8L387.5 397.3 M1027.7 426L1043 426.8 M222 437.5L718 460.8L1200 480.6" stroke="#b4b4c8" stroke-opacity="0.72" stroke-width="1" stroke-dasharray="2.6 2.4" fill="none"/><path d="M222 340.4L1200 385" stroke="#c86262" stroke-width="1.4" fill="none"/><path d="M713.4 290.6L706.4 433.8" stroke="#74d074" stroke-width="1.5" fill="none"/><path d="M684.6 361L735 363.3" stroke="#2a2a3a" stroke-width="1.6" opacity="0.8"/><path d="M347 296.8L1076.7 330.1L1072.3 427.5L1043 426.8L1032 376.5L1017.8 379.6L1027.7 426L387.5 397.3L401.2 351.6L387.8 347.6L372.2 395.8L343 393.9Z" stroke="#00ff00" stroke-width="2" fill="none" stroke-linejoin="round"/><path d="M399.8 353.8L399.1 397.3" stroke="#0a14d0" stroke-width="2"/><circle cx="347" cy="296.8" r="1.8" fill="#00ff00"/><circle cx="1076.7" cy="330.1" r="1.8" fill="#00ff00"/><circle cx="1072.3" cy="427.5" r="1.8" fill="#00ff00"/><circle cx="1043" cy="426.8" r="1.8" fill="#00ff00"/><circle cx="1032" cy="376.5" r="1.8" fill="#00ff00"/><circle cx="1017.8" cy="379.6" r="1.8" fill="#00ff00"/><circle cx="1027.7" cy="426" r="1.8" fill="#00ff00"/><circle cx="387.5" cy="397.3" r="1.8" fill="#00ff00"/><circle cx="401.2" cy="351.6" r="1.8" fill="#00ff00"/><circle cx="387.8" cy="347.6" r="1.8" fill="#00ff00"/><circle cx="372.2" cy="395.8" r="1.8" fill="#00ff00"/><circle cx="343" cy="393.9" r="1.8" fill="#00ff00"/><path d="M300 294.7L347.5 296.8M295 392.3L343 393.9M316.3 297L316 326M313 385L312.8 393" stroke="#ff2a1a" stroke-width="1.3" fill="none"/><path d="M316.5 296.5l-3.2 9h6.4z M312.5 393.5l-3.2-9h6.4z" fill="#ff2a1a"/><text x="0" y="0" transform="translate(319 384) rotate(-88.5)" font-family="Liberation Sans" font-size="14.8" fill="#b02a2a" stroke="#b02a2a" stroke-width="0.3">200 mm</text><path d="M349 272L347.5 296.8M1077.4 305.5L1076.7 330.1M350.4 289.4L675 303.6M749 307L1076.7 322" stroke="#ff2a1a" stroke-width="1.3" fill="none"/><path d="M349.5 289.4l9.5-3.5-0.5 7z M1077 322l-9.5 3-0.2-7z" fill="#ff2a1a"/><text x="0" y="0" transform="translate(680 310) rotate(2.6)" font-family="Liberation Sans" font-size="14.4" fill="#b83c3c" stroke="#b83c3c" stroke-width="0.15">1.500 mm</text><path d="M355 295.5l5 2.6-5 2.8M342.5 304.5l3 5 3-5M1069 327l-6 2.5 5 3M706.8 311l4.2 3-4.2 3M717 311l-4.2 3 4.2 3M704.3 363.5l4 3-4 3M714.3 363.5l-4 3 4 3M704.5 397.4h7M708 300.5h9" stroke="#ff2a1a" stroke-width="1.2" fill="none"/><text x="0" y="0" transform="translate(357.5 327.5) rotate(18)" font-family="Liberation Sans" font-size="14.5" fill="#b02a2a" stroke="#b02a2a" stroke-width="0.3">30 mm</text><path d="M397 316.8L387.7 346.7M411.2 321.5L401.8 350.2" stroke="#ff2a1a" stroke-width="1.2" fill="none"/><path d="M401 339l6-4 0.5 6z" fill="#ff2a1a"/><path d="M403 352.5h15M413.5 349.5l4.7 3-4.7 3" stroke="#ff2a1a" stroke-width="1.2" fill="none"/><rect x="323.8" y="336.1" width="6.5" height="1.9" fill="#ff2f1f"/><rect x="323.8" y="339.40000000000003" width="6.5" height="1.9" fill="#ff2f1f"/><text x="332" y="343.7" font-family="Liberation Sans" font-size="6.8" fill="#ff2f1f" opacity="0.85">34</text><rect x="325.8" y="346" width="1.9" height="9.5" fill="#ff2f1f"/><path d="M358.4 364.6l7-7.5M361.0 365.6l7-7.5" stroke="#ff2f1f" stroke-width="1.9" fill="none"/><text x="367.8" y="366" font-family="Liberation Sans" font-size="7.2" fill="#ff2f1f" opacity="0.85">23</text><path d="M372.5 371.5l7-7.5M375.1 372.5l7-7.5" stroke="#ff2f1f" stroke-width="1.9" fill="none"/><text x="382.4" y="374.2" font-family="Liberation Sans" font-size="7.2" fill="#ff2f1f" opacity="0.85">23</text><rect x="350.8" y="370.5" width="5.8" height="1.9" fill="#ff2f1f"/><rect x="350.8" y="373.8" width="5.8" height="1.9" fill="#ff2f1f"/><path d="M362.5 369.5v7.5M358.4 376.1h8.2" stroke="#ff2f1f" stroke-width="2" fill="none"/><text x="360.7" y="380" font-family="Liberation Sans" font-size="6" fill="#ff2f1f" opacity="0.85">12</text><text x="368.4" y="378.3" font-family="Liberation Sans" font-size="7.2" fill="#ff2f1f" opacity="0.85">22</text><path d="M339 385.4l4.4-7 4.4 7M345 350l3-3.5 2.5 3" stroke="#ff2f1f" stroke-width="1.3" fill="none"/><rect x="349.6" y="386.20000000000005" width="9.4" height="1.9" fill="#ff2f1f"/><path d="M394.15 337.5v8M390 344.6h8.3" stroke="#ff2f1f" stroke-width="2" fill="none"/><text x="399" y="333.5" font-family="Liberation Sans" font-size="6.5" fill="#ff2f1f" opacity="0.85">22</text><text x="399" y="345.5" font-family="Liberation Sans" font-size="6.5" fill="#ff2f1f" opacity="0.85">22</text><rect x="413.20000000000005" y="371.3" width="1.9" height="8.2" fill="#ff2f1f"/><path d="M412 338.5l2-5 5-1.5M394.7 385.4l1.5-5 4-1.5" stroke="#ff2f1f" stroke-width="1.5" fill="none"/><circle cx="410" cy="357.8" r="1.6" fill="none" stroke="#e8832c" stroke-width="0.8"/><path d="M343 394.5L341.3 434M372.3 396L370.3 435M331 416.5h10" stroke="#e8832c" stroke-width="1.4" fill="none"/><path d="M341.8 416.7l6-3.2v6.4zM370.8 418.5l-6-3.2v6.4z" fill="#e8832c"/><text x="0" y="0" transform="translate(336.6 422.6) rotate(1)" font-family="Liberation Sans" font-size="13.6" fill="#e8832c" stroke="#e8832c" stroke-width="0.3" opacity="0.85">60 mm</text><text x="387.2" y="365.6" font-family="Liberation Sans" font-size="12.6" fill="#e8832c" opacity="0.8">15</text><rect x="1080.7" y="371.2" width="7.2" height="1.9" fill="#ff2f1f"/><rect x="1080.7" y="374.5" width="7.2" height="1.9" fill="#ff2f1f"/><text x="1088.9" y="378.9" font-family="Liberation Sans" font-size="7.2" fill="#ff2f1f" opacity="0.85">34</text><rect x="1083.1" y="381.4" width="1.9" height="8.7" fill="#ff2f1f"/><path d="M1002.2 379.9h15.8M1008 375.5l-5.8 4.4 5.8 4.4" stroke="#ff2f1f" stroke-width="1.3" fill="none"/><rect x="1020.1" y="383" width="7.2" height="1.9" fill="#ff2f1f"/><rect x="1020.1" y="386.3" width="7.2" height="1.9" fill="#ff2f1f"/><text x="1028.9" y="390.7" font-family="Liberation Sans" font-size="7.2" fill="#ff2f1f" opacity="0.85">32</text><path d="M1020.15 394.2v7.8M1015 401.1h10.3" stroke="#ff2f1f" stroke-width="2" fill="none"/><text x="1024.8" y="403.5" font-family="Liberation Sans" font-size="7.2" fill="#ff2f1f" opacity="0.85">980</text><path d="M1000.6 408.9l7-7.5M1003.2 409.9l7-7.5" stroke="#ff2f1f" stroke-width="1.9" fill="none"/><text x="1010.4" y="410.7" font-family="Liberation Sans" font-size="7.2" fill="#ff2f1f" opacity="0.85">29</text><path d="M1015 414l7-7.5M1017.6 415l7-7.5" stroke="#ff2f1f" stroke-width="1.9" fill="none"/><text x="1025.3" y="416.3" font-family="Liberation Sans" font-size="7.2" fill="#ff2f1f" opacity="0.85">29</text><rect x="1050.4" y="405" width="6.7" height="1.9" fill="#ff2f1f"/><rect x="1050.4" y="408.3" width="6.7" height="1.9" fill="#ff2f1f"/><text x="1059.1" y="412.7" font-family="Liberation Sans" font-size="7.2" fill="#ff2f1f" opacity="0.85">12</text><rect x="1049.4" y="418.5" width="8.7" height="1.9" fill="#ff2f1f"/></g><path d="M1172 612.3V598" stroke="#2c2ca0" stroke-width="1.3"/><path d="M1172 593.2l-2.6 6.4h5.2z" fill="#2c2ca0"/><path d="M1172 612.3H1186" stroke="#a82828" stroke-width="1.3"/><path d="M1191 612.6l-6.2-2.6v5.2z" fill="#a82828"/><circle cx="1171.8" cy="612.2" r="1.2" fill="#20a020"/><text x="1174.5" y="593.5" font-family="Liberation Sans" font-size="7" fill="#222" stroke="#222" stroke-width="0.25">z</text><text x="1192.8" y="613.2" font-family="Liberation Sans" font-size="7" fill="#222" stroke="#222" stroke-width="0.25">x</text><text x="1172.5" y="611" font-family="Liberation Sans" font-size="6" fill="#444">y</text></svg>
<div style="position:absolute;left:221px;top:640px;width:979px;height:21px;background:#f2f1f0"></div>
<div style="position:absolute;left:221.5px;top:640px;width:88px;height:19px;background:linear-gradient(#e9e8e6,#f1f0ee);border:1px solid #d4d1cd;border-top:none;border-radius:0 0 3px 3px;box-sizing:border-box"></div>
<div style="position:absolute;left:309.8px;top:640px;width:90.2px;height:21px;background:#fbfbfa;border:1px solid #cfccc8;border-top:none;border-radius:0 0 3px 3px;box-sizing:border-box"></div>
<div style="position:absolute;left:400.5px;top:640px;width:80px;height:19px;background:linear-gradient(#e9e8e6,#f1f0ee);border:1px solid #d4d1cd;border-top:none;border-radius:0 0 3px 3px;box-sizing:border-box"></div>
<div class="t" style="left:241.06px;top:645.79px;font-size:9.7px;color:#4c4c4c;font-weight:normal;font-family:'Liberation Sans', sans-serif;letter-spacing:0.068px;">Start page</div>
<div class="t" style="left:329.38px;top:645.99px;font-size:9.7px;color:#4c4c4c;font-weight:normal;font-family:'Liberation Sans', sans-serif;letter-spacing:-0.071px;">bench2 : 1*</div>
<div class="t" style="left:420.38px;top:645.99px;font-size:9.7px;color:#4c4c4c;font-weight:normal;font-family:'Liberation Sans', sans-serif;letter-spacing:0.145px;">bench2*</div>
<svg style="position:absolute;left:226px;top:644.3px;" width="10" height="11" viewBox="0 0 10 11"><path d="M0.5 0.5h5.8v2.4H3.4v1.8h2.6v2.3H3.4v3.6H0.5z" fill="#d9141b"/><g transform="translate(6.5 6.6)"><circle r="2.6" fill="#3d6db5"/><path d="M0 -3.6V3.6M-3.6 0H3.6M-2.5 -2.5L2.5 2.5M-2.5 2.5L2.5 -2.5" stroke="#3d6db5" stroke-width="1.3"/><circle r="0.9" fill="#f0f0f0"/></g></svg>
<svg style="position:absolute;left:314.3px;top:644.5px;" width="10" height="11" viewBox="0 0 10 11"><path d="M0.5 0.5h5.8v2.4H3.4v1.8h2.6v2.3H3.4v3.6H0.5z" fill="#d9141b"/><g transform="translate(6.5 6.6)"><circle r="2.6" fill="#3d6db5"/><path d="M0 -3.6V3.6M-3.6 0H3.6M-2.5 -2.5L2.5 2.5M-2.5 2.5L2.5 -2.5" stroke="#3d6db5" stroke-width="1.3"/><circle r="0.9" fill="#f0f0f0"/></g></svg>
<svg style="position:absolute;left:294px;top:646.5px;" width="8" height="8" viewBox="0 0 8 8"><path d="M1.5 1.5l5 5M6.5 1.5l-5 5" stroke="#505050" stroke-width="2.2"/></svg>
<svg style="position:absolute;left:385.5px;top:646.5px;" width="8" height="8" viewBox="0 0 8 8"><path d="M1.5 1.5l5 5M6.5 1.5l-5 5" stroke="#505050" stroke-width="2.2"/></svg>
<svg style="position:absolute;left:464px;top:646.5px;" width="8" height="8" viewBox="0 0 8 8"><path d="M1.5 1.5l5 5M6.5 1.5l-5 5" stroke="#505050" stroke-width="2.2"/></svg>
<svg style="position:absolute;left:405.3px;top:645.5px;" width="11" height="9" viewBox="0 0 11 9"><rect x="0.5" y="0.5" width="10" height="8" fill="#f4f4f4" stroke="#666" stroke-width="0.8"/><path d="M0.5 2.5h10M0.5 4.5h10M0.5 6.5h10M3 0.5v8" stroke="#666" stroke-width="0.8"/></svg>
<div style="position:absolute;left:208.3px;top:122.5px;width:8px;height:9px;background:linear-gradient(#fbfbfa,#efeeec);border:1px solid #d0cdc9;border-radius:4px 4px 0 0;box-sizing:border-box"></div>
<svg style="position:absolute;left:211px;top:126px;" width="3" height="2" viewBox="0 0 3 2"><path d="M0 1h2.4" stroke="#777" stroke-width="1"/></svg>
<div style="position:absolute;left:208.3px;top:650px;width:8px;height:10px;background:linear-gradient(#fbfbfa,#efeeec);border:1px solid #d0cdc9;border-radius:0 0 4px 4px;box-sizing:border-box"></div>
<svg style="position:absolute;left:210.2px;top:653.5px;" width="5" height="3" viewBox="0 0 5 3"><path d="M0 0h4.2l-2.1 2.6z" fill="#666"/></svg>
<svg style="position:absolute;left:186.8px;top:348px;" width="3" height="2" viewBox="0 0 3 2"><path d="M0 1h2.4" stroke="#777" stroke-width="1"/></svg>
<svg style="position:absolute;left:186.5px;top:463.5px;" width="5" height="3" viewBox="0 0 5 3"><path d="M0 0h4.2l-2.1 2.6z" fill="#666"/></svg>
<svg style="position:absolute;left:186.8px;top:533px;" width="3" height="2" viewBox="0 0 3 2"><path d="M0 1h2.4" stroke="#777" stroke-width="1"/></svg>
<svg style="position:absolute;left:186.5px;top:648.5px;" width="5" height="3" viewBox="0 0 5 3"><path d="M0 0h4.2l-2.1 2.6z" fill="#666"/></svg>
<svg style="position:absolute;left:210.8px;top:354px;" width="3" height="5" viewBox="0 0 3 5"><path d="M0 0.5h2.2M0 2.3h2.2M0 4.1h2.2" stroke="#b5b2ad" stroke-width="0.8"/></svg>
<svg style="position:absolute;left:19px;top:649.5px;" width="15" height="5" viewBox="0 0 15 5"><circle cx="12.4" cy="2.6" r="2.4" fill="#d50f15"/></svg>
<svg style="position:absolute;left:1036px;top:667px;" width="8" height="10" viewBox="0 0 8 10"><rect x="0.8" y="0.8" width="6.4" height="8.6" rx="3" fill="none" stroke="#444" stroke-width="1.1"/><path d="M4 1v3" stroke="#444" stroke-width="0.9"/></svg>
<svg style="position:absolute;left:1070px;top:671px;" width="6" height="4" viewBox="0 0 6 4"><path d="M0 0h5.5l-2.75 3.2z" fill="#666"/></svg>
<div style="position:absolute;left:0px;top:661px;width:1200px;height:1px;background:#dcdad6"></div>
<div class="t" style="left:3.30px;top:666.79px;font-size:9.7px;color:#4c4c4c;font-weight:normal;font-family:'Liberation Sans', sans-serif;letter-spacing:-0.094px;">Preselected: Unnamed.Sketch003.Edge1 (253.911575,-0.008012,100.000015)</div>
<div class="t" style="left:1047.02px;top:667.79px;font-size:9.7px;color:#4c4c4c;font-weight:normal;font-family:'Liberation Sans', sans-serif;letter-spacing:-0.768px;">CAD</div>
<div class="t" style="left:1083.52px;top:667.79px;font-size:9.7px;color:#4c4c4c;font-weight:normal;font-family:'Liberation Sans', sans-serif;letter-spacing:-0.068px;">2007,78 mm x 1136,10 mm</div>
</body></html>
